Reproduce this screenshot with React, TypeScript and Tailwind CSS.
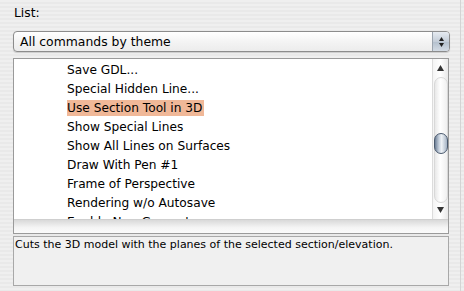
import React from "react";

const items = [
  "Save GDL...",
  "Special Hidden Line...",
  "Use Section Tool in 3D",
  "Show Special Lines",
  "Show All Lines on Surfaces",
  "Draw With Pen #1",
  "Frame of Perspective",
  "Rendering w/o Autosave",
  "Enable Non-Geometry",
];

function Tri({ up }: { up?: boolean }) {
  return (
    <svg width="7" height="6" viewBox="0 0 7 6">
      {up ? <path d="M3.5 0 L7 6 L0 6 Z" fill="#333" /> : <path d="M0 0 L7 0 L3.5 6 Z" fill="#333" />}
    </svg>
  );
}

export default function App() {
  const font = { fontFamily: '"DejaVu Sans", "Liberation Sans", sans-serif' };
  return (
    <div
      className="relative w-[464px] h-[291px] overflow-hidden bg-[repeating-linear-gradient(to_bottom,#efefef_0px,#efefef_2px,#e9e9e9_2px,#e9e9e9_4px)] pl-[13px] text-black"
      style={font}
    >
      <div className="absolute right-[3px] top-0 h-full w-px bg-[#d4d4d4]" />
      <div className="h-[31px] pt-[4px] pl-[1px] text-[12.3px] leading-[18px]">List:</div>

      {/* popup */}
      <div className="flex h-[21px] w-[437px] rounded-[4px] border border-[#8c8c8c] bg-[linear-gradient(to_bottom,#ffffff,#f4f4f4_50%,#ececec)] shadow-[0_1px_1px_rgba(0,0,0,0.15)]">
        <div className="flex-1 pl-[6px] text-[12.4px] leading-[19px]">All commands by theme</div>
        <div className="flex w-[17px] flex-col items-center justify-center gap-[2px] rounded-r-[3px] border-l border-[#9aa3ad] bg-[linear-gradient(to_bottom,#e6ebf1,#c4cdd8_50%,#b3bfcc_51%,#d3dbe4)]">
          <svg width="5" height="4" viewBox="0 0 5 4"><path d="M2.5 0 L5 4 L0 4 Z" fill="#222" /></svg>
          <svg width="5" height="4" viewBox="0 0 5 4"><path d="M0 0 L5 0 L2.5 4 Z" fill="#222" /></svg>
        </div>
      </div>

      {/* list box */}
      <div className="mt-[6px] flex h-[176px] w-[436px] flex-col border border-[#9a9a9a] bg-white">
        <div className="flex h-[160px]">
          <div className="flex-1 overflow-hidden pl-[53px] pt-[2px] text-[12.2px]">
            {items.map((t, i) => (
              <div key={t} className="h-[19px] leading-[19px]">
                <span className={i === 2 ? "inline-block h-[16px] bg-[#f0b898] pr-[2px] leading-[16px]" : ""}>{t}</span>
              </div>
            ))}
          </div>
          <div className="flex w-[16px] flex-col items-center border-l border-[#dcdcdc] bg-[linear-gradient(to_right,#f4f4f4,#ffffff_50%,#e8e8e8)]">
            <div className="flex h-[16px] items-center justify-center pt-[2px]"><Tri up /></div>
            <div className="relative mt-[2px] h-[126px] w-[14px] rounded-full border border-[#d8d8d8] bg-[linear-gradient(to_right,#e8e8e8,#ffffff_45%,#f0f0f0)]">
              <div className="absolute left-[-1px] top-[55px] h-[21px] w-[14px] rounded-full border border-[#4b5a6e] bg-[linear-gradient(to_right,#6d7f96,#c9d3df_35%,#eef2f6_55%,#a5b3c4)]" />
            </div>
            <div className="flex h-[14px] items-center justify-center"><Tri /></div>
          </div>
        </div>
        <div className="flex-1 border-t border-[#cfcfcf] bg-[linear-gradient(to_bottom,#d9d9d9,#f5f5f5_60%,#fafafa)]" />
      </div>

      {/* description */}
      <div className="mt-[2px] h-[50px] w-[436px] border border-[#a8a8a8] bg-[#f0f0f0] pl-[1px] text-[11px] leading-[16px]">
        Cuts the 3D model with the planes of the selected section/elevation.
      </div>
    </div>
  );
}
